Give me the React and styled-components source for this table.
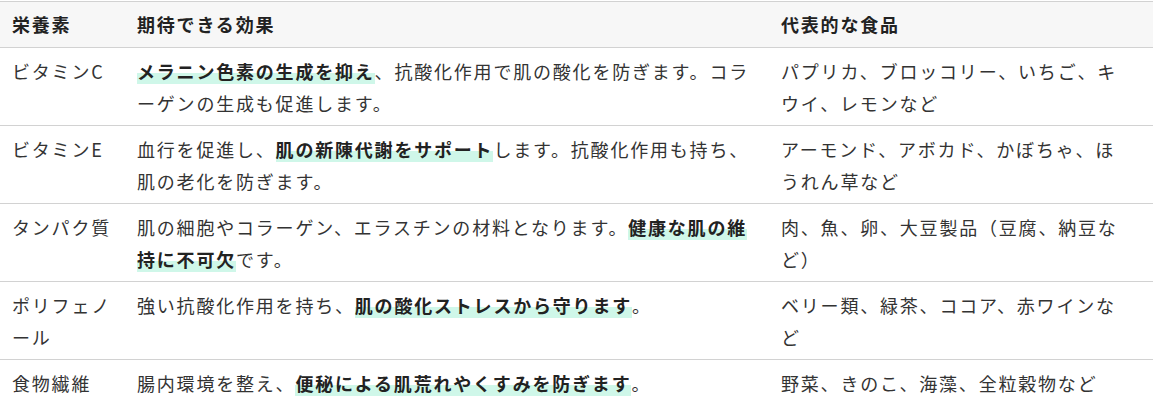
import React from "react";
import styled, { createGlobalStyle } from "styled-components";

const Global = createGlobalStyle`
  html, body { margin: 0; padding: 0; background: #fff; }
  body {
    font-family: "Noto Sans CJK JP", "Noto Sans", sans-serif;
    color: #333;
  }
`;

const Wrap = styled.div`
  padding-top: 1px;
`;

const Table = styled.table`
  width: 100%;
  border-collapse: collapse;
  table-layout: fixed;
  font-size: 18px;
  line-height: 32px;
  letter-spacing: 1.8px;
`;

const Col = styled.col`
  width: ${(p) => p.$w};
`;

const HeadRow = styled.tr`
  background: #f7f7f7;
  border-top: 1px solid #d2d2d2;
  border-bottom: 1px solid #d2d2d2;
`;

const Th = styled.th`
  text-align: left;
  font-weight: 700;
  color: #222;
  padding: 6px 12px 7px;
  vertical-align: top;
`;

const Row = styled.tr`
  border-bottom: 1px solid #d2d2d2;
`;

const Td = styled.td`
  padding: 7px ${(p) => p.$pr || "12px"} 6px 12px;
  vertical-align: top;
  color: #333;
`;

const Mark = styled.strong`
  font-weight: 700;
  color: #222;
  background: linear-gradient(transparent 58%, #cff7e9 58%);
`;

const rows = [
  {
    name: "ビタミンC",
    effect: [
      <Mark key="a">メラニン色素の生成を抑え</Mark>,
      "、抗酸化作用で肌の酸化を防ぎます。コラーゲンの生成も促進します。",
    ],
    food: "パプリカ、ブロッコリー、いちご、キウイ、レモンなど",
  },
  {
    name: "ビタミンE",
    effect: [
      "血行を促進し、",
      <Mark key="a">肌の新陳代謝をサポート</Mark>,
      "します。抗酸化作用も持ち、肌の老化を防ぎます。",
    ],
    food: "アーモンド、アボカド、かぼちゃ、ほうれん草など",
  },
  {
    name: "タンパク質",
    effect: [
      "肌の細胞やコラーゲン、エラスチンの材料となります。",
      <Mark key="a">健康な肌の維持に不可欠</Mark>,
      "です。",
    ],
    food: "肉、魚、卵、大豆製品（豆腐、納豆など）",
  },
  {
    name: "ポリフェノール",
    effect: [
      "強い抗酸化作用を持ち、",
      <Mark key="a">肌の酸化ストレスから守ります</Mark>,
      "。",
    ],
    food: "ベリー類、緑茶、ココア、赤ワインなど",
  },
  {
    name: "食物繊維",
    effect: [
      "腸内環境を整え、",
      <Mark key="a">便秘による肌荒れやくすみを防ぎます</Mark>,
      "。",
    ],
    food: "野菜、きのこ、海藻、全粒穀物など",
  },
];

export default function App() {
  return (
    <>
      <Global />
      <Wrap>
        <Table>
          <colgroup>
            <Col $w="125px" />
            <Col $w="644px" />
            <Col $w="auto" />
          </colgroup>
          <thead>
            <HeadRow>
              <Th>栄養素</Th>
              <Th>期待できる効果</Th>
              <Th>代表的な食品</Th>
            </HeadRow>
          </thead>
          <tbody>
            {rows.map((r) => (
              <Row key={r.name}>
                <Td>{r.name}</Td>
                <Td>{r.effect}</Td>
                <Td $pr="24px">{r.food}</Td>
              </Row>
            ))}
          </tbody>
        </Table>
      </Wrap>
    </>
  );
}
